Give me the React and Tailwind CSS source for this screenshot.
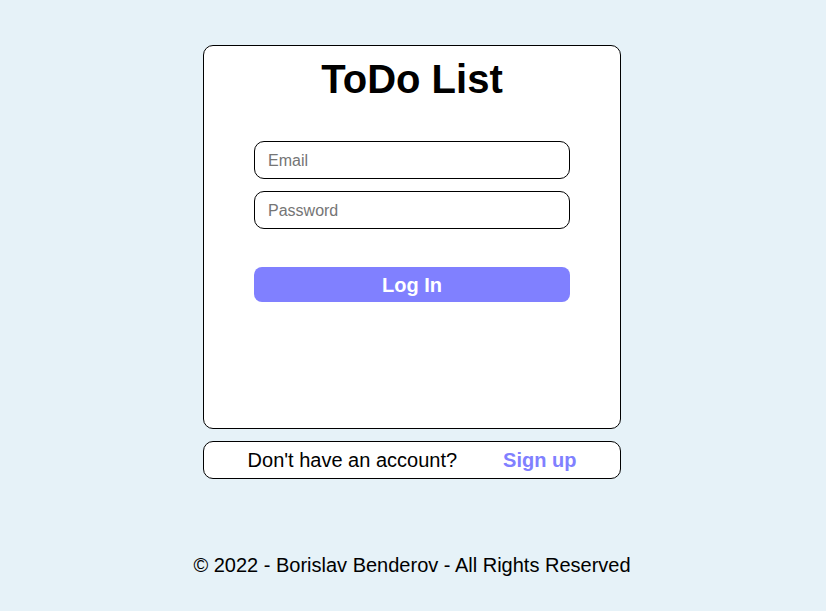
export default function App() {
  return (
    <div className="min-h-screen bg-[#e6f2f8] font-['Liberation_Sans',Arial,sans-serif] text-black flex flex-col items-center pt-[45px] pr-[2px]">
      <div className="w-[418px] h-[384px] bg-white border border-black rounded-[10px] flex flex-col items-center">
        <h1 className="mt-[10px] text-[40px] leading-[46px] font-bold">ToDo List</h1>
        <form className="mt-[39px] w-[316px] flex flex-col" onSubmit={e => e.preventDefault()}>
          <input
            type="email"
            placeholder="Email"
            className="h-[38px] border border-black rounded-[10px] px-[13px] pt-[2px] text-base placeholder:text-[#757575] outline-none"
          />
          <input
            type="password"
            placeholder="Password"
            className="mt-[12px] h-[38px] border border-black rounded-[10px] px-[13px] pt-[2px] text-base placeholder:text-[#757575] outline-none"
          />
          <button
            type="submit"
            className="mt-[38px] h-[35px] rounded-[8px] bg-[#8080ff] text-white text-[20px] font-bold"
          >
            Log In
          </button>
        </form>
      </div>
      <div className="mt-[12px] w-[418px] h-[38px] bg-white border border-black rounded-[10px] flex items-center justify-center gap-[46px] text-[20px]">
        <span>Don't have an account?</span>
        <button className="font-bold text-[#8080ff]">Sign up</button>
      </div>
      <footer className="mt-[75px] text-[20px] leading-[23px]">
        © 2022 - Borislav Benderov - All Rights Reserved
      </footer>
    </div>
  );
}
